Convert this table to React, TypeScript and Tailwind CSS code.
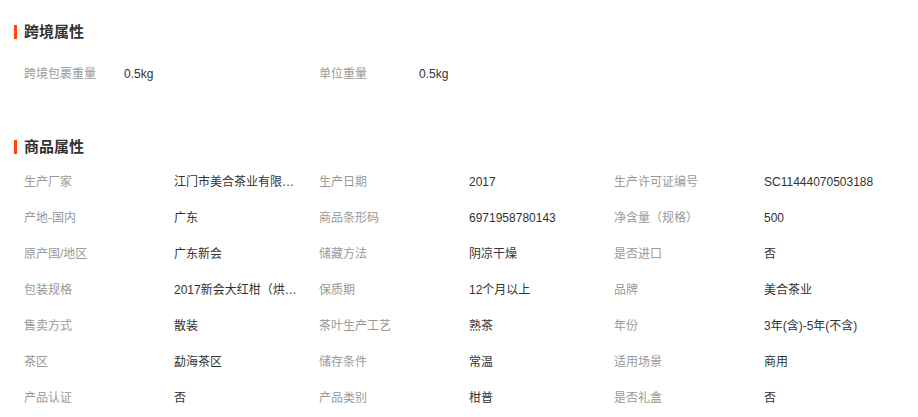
import React from "react";

type Attr = { label: string; value: string };

const crossBorder: Attr[] = [
  { label: "跨境包裹重量", value: "0.5kg" },
  { label: "单位重量", value: "0.5kg" },
];

const goods: Attr[] = [
  { label: "生产厂家", value: "江门市美合茶业有限公司" },
  { label: "生产日期", value: "2017" },
  { label: "生产许可证编号", value: "SC11444070503188" },
  { label: "产地-国内", value: "广东" },
  { label: "商品条形码", value: "6971958780143" },
  { label: "净含量（规格）", value: "500" },
  { label: "原产国/地区", value: "广东新会" },
  { label: "储藏方法", value: "阴凉干燥" },
  { label: "是否进口", value: "否" },
  { label: "包装规格", value: "2017新会大红柑（烘干）" },
  { label: "保质期", value: "12个月以上" },
  { label: "品牌", value: "美合茶业" },
  { label: "售卖方式", value: "散装" },
  { label: "茶叶生产工艺", value: "熟茶" },
  { label: "年份", value: "3年(含)-5年(不含)" },
  { label: "茶区", value: "勐海茶区" },
  { label: "储存条件", value: "常温" },
  { label: "适用场景", value: "商用" },
  { label: "产品认证", value: "否" },
  { label: "产品类别", value: "柑普" },
  { label: "是否礼盒", value: "否" },
];

function SectionTitle({ title }: { title: string }) {
  return (
    <div className="flex items-center h-[20px]">
      <span className="w-[3px] h-[14px] bg-[#ff4400]" />
      <span className="ml-[7px] text-[15px] font-bold text-[#333]">{title}</span>
    </div>
  );
}

function AttrGrid({ items, labelWidth }: { items: Attr[]; labelWidth: string }) {
  return (
    <div className="grid grid-cols-[295px_295px_295px] pl-[10px]">
      {items.map((a) => (
        <div key={a.label} className="flex items-center h-[36px] text-[12px]">
          <span className={`${labelWidth} shrink-0 text-[#999]`}>{a.label}</span>
          <span className="max-w-[126px] truncate text-[#333]">{a.value}</span>
        </div>
      ))}
    </div>
  );
}

export default function App() {
  return (
    <div
      className="w-[918px] h-[417px] bg-white pl-[14px] overflow-hidden"
      style={{ fontFamily: '"Liberation Sans", "Noto Sans CJK SC", sans-serif' }}
    >
      <div className="pt-[22px]">
        <SectionTitle title="跨境属性" />
      </div>
      <div className="mt-[14px]">
        <AttrGrid items={crossBorder} labelWidth="w-[100px]" />
      </div>
      <div className="mt-[45px]">
        <SectionTitle title="商品属性" />
      </div>
      <div className="mt-[7px]">
        <AttrGrid items={goods} labelWidth="w-[150px]" />
      </div>
    </div>
  );
}
